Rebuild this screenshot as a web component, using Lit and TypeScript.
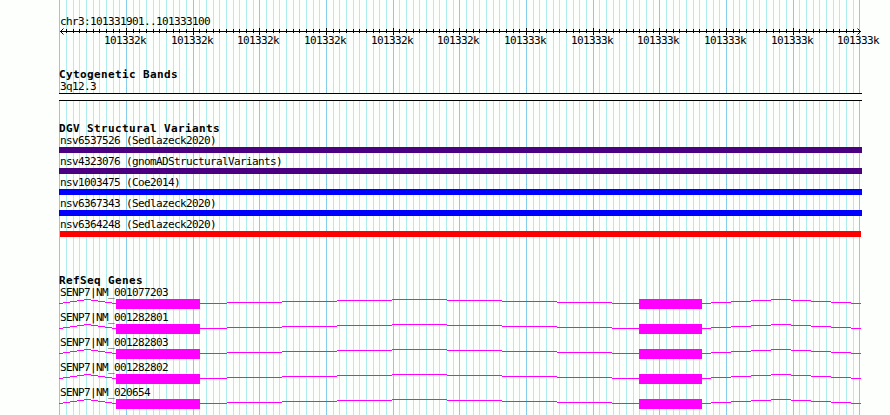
import { LitElement, html, svg, css } from 'lit'
import { customElement, property } from 'lit/decorators.js'

const START = 59.33
const STEP = 20 / 3
const WIDTH = 890

const TICKS = Array.from({ length: 121 }, (_, i) => ({
  x: Math.round(START + i * STEP),
  major: i % 10 === 0,
}))

interface Variant { name: string; color: string; x: number; width: number }

const VARIANTS: Variant[] = [
  { name: 'nsv6537526 (Sedlazeck2020)', color: '#4b0082', x: 0, width: 803 },
  { name: 'nsv4323076 (gnomADStructuralVariants)', color: '#4b0082', x: 0, width: 803 },
  { name: 'nsv1003475 (Coe2014)', color: '#0000ff', x: 0, width: 803 },
  { name: 'nsv6367343 (Sedlazeck2020)', color: '#0000ff', x: 0, width: 803 },
  { name: 'nsv6364248 (Sedlazeck2020)', color: '#ff0000', x: 1, width: 801 },
]

const GENES = [
  'SENP7|NM_001077203',
  'SENP7|NM_001282801',
  'SENP7|NM_001282803',
  'SENP7|NM_001282802',
  'SENP7|NM_020654',
]

const EXONS = [[57, 84], [580, 63]]

// x positions where each intron changes its row
const INTRONS = [
  [0, 4, 11, 18, 25, 32, 39, 46, 53, 57],
  [141, 168, 223, 278, 333, 388, 443, 498, 553, 580],
  [643, 652, 672, 692, 712, 732, 752, 772, 792, 802],
]

@customElement('track-grid')
export class TrackGrid extends LitElement {
  static styles = css`
    :host { display: block; }
    svg { display: block; }
    .minor { fill: #afeeee; }
    .major { fill: #87ceeb; }
  `

  render() {
    return html`
      <svg width=${WIDTH} height="415" shape-rendering="crispEdges">
        ${TICKS.map(t => svg`<rect class=${t.major ? 'major' : 'minor'} x=${t.x} y="0" width="1" height="415" />`)}
      </svg>
    `
  }
}

@customElement('track-ruler')
export class TrackRuler extends LitElement {
  static styles = css`
    :host { display: block; }
    svg { display: block; }
    .label {
      font: 11px 'DejaVu Sans Mono', monospace;
      letter-spacing: -0.622px;
      fill: #000;
    }
    .arrow { fill: none; stroke: #000; }
  `

  render() {
    return html`
      <svg width=${WIDTH} height="22">
        <g shape-rendering="crispEdges">
          <rect x="60" y="5" width="801" height="1" />
          ${TICKS.slice(1, -1).map(t => svg`
            <rect x=${t.x} y=${t.major ? 2 : 3} width="1" height=${t.major ? 7 : 4} />
          `)}
        </g>
        <path class="arrow" d="M63.5 2.5 L60.5 5.5 L63.5 8.5 M857.5 2.5 L860.5 5.5 L857.5 8.5" />
        ${TICKS.filter(t => t.major).slice(1).map((t, i) => svg`
          <text class="label" x=${t.x - 22} y="18">${i < 6 ? '101332k' : '101333k'}</text>
        `)}
      </svg>
    `
  }
}

@customElement('variant-bar')
export class VariantBar extends LitElement {
  @property({ attribute: false }) variant!: Variant

  static styles = css`
    :host { display: block; height: 21px; }
    .name {
      height: 12px;
      padding-left: 1px;
      font: 11px/12px 'DejaVu Sans Mono', monospace;
      letter-spacing: -0.622px;
      white-space: pre;
    }
    .bar { height: 6px; }
  `

  render() {
    const { name, color, x, width } = this.variant
    return html`
      <div class="name">${name}</div>
      <div class="bar" style="margin-left:${x}px;width:${width}px;background:${color}"></div>
    `
  }
}

@customElement('gene-model')
export class GeneModel extends LitElement {
  @property() name = ''

  static styles = css`
    :host { display: block; height: 25px; }
    .name {
      height: 12px;
      padding-left: 1px;
      font: 11px/12px 'DejaVu Sans Mono', monospace;
      letter-spacing: -0.622px;
      white-space: pre;
    }
    svg { display: block; fill: #ff00ff; }
  `

  render() {
    return html`
      <div class="name">${this.name}</div>
      <svg width="803" height="10" shape-rendering="crispEdges">
        ${EXONS.map(([x, w]) => svg`<rect x=${x} y="0" width=${w} height="10" />`)}
        ${INTRONS.map(xs => xs.slice(0, -1).map((x, i) => svg`
          <rect x=${x} y=${Math.abs(4 - i)} width=${xs[i + 1] - x} height="1" />
        `))}
      </svg>
    `
  }
}

@customElement('app-root')
export class AppRoot extends LitElement {
  static styles = css`
    :host {
      display: grid;
      width: 890px;
      height: 415px;
      overflow: hidden;
      background: #fdfffc;
      color: #000;
    }
    track-grid, .tracks { grid-area: 1 / 1; }
    .tracks { display: flex; flex-direction: column; height: 415px; padding-top: 16px; box-sizing: border-box; }
    .tracks > * { flex: none; }
    .text {
      height: 10px;
      padding-left: 60px;
      font: 11px/12px 'DejaVu Sans Mono', monospace;
      letter-spacing: -0.622px;
      white-space: pre;
    }
    .track { padding-left: 59px; }
    h2 {
      margin: 0;
      height: 12px;
      font: bold 11px/12px 'DejaVu Sans Mono', monospace;
      letter-spacing: 0.378px;
      white-space: pre;
    }
    .cyto { padding-top: 21px; }
    .cyto .text { height: 12px; padding-left: 1px; }
    .band {
      width: 803px;
      height: 8px;
      box-sizing: border-box;
      border: solid #000;
      border-width: 1px 0;
      background: #fdfffc;
    }
    .variants { padding-top: 22px; }
    .genes { padding-top: 35px; }
  `

  render() {
    return html`
      <track-grid></track-grid>
      <div class="tracks">
        <div class="text">chr3:101331901..101333100</div>
        <track-ruler></track-ruler>
        <section class="track cyto">
          <h2>Cytogenetic Bands</h2>
          <div class="text">3q12.3</div>
          <div class="band"></div>
        </section>
        <section class="track variants">
          <h2>DGV Structural Variants</h2>
          ${VARIANTS.map(v => html`<variant-bar .variant=${v}></variant-bar>`)}
        </section>
        <section class="track genes">
          <h2>RefSeq Genes</h2>
          ${GENES.map(g => html`<gene-model name=${g}></gene-model>`)}
        </section>
      </div>
    `
  }
}
